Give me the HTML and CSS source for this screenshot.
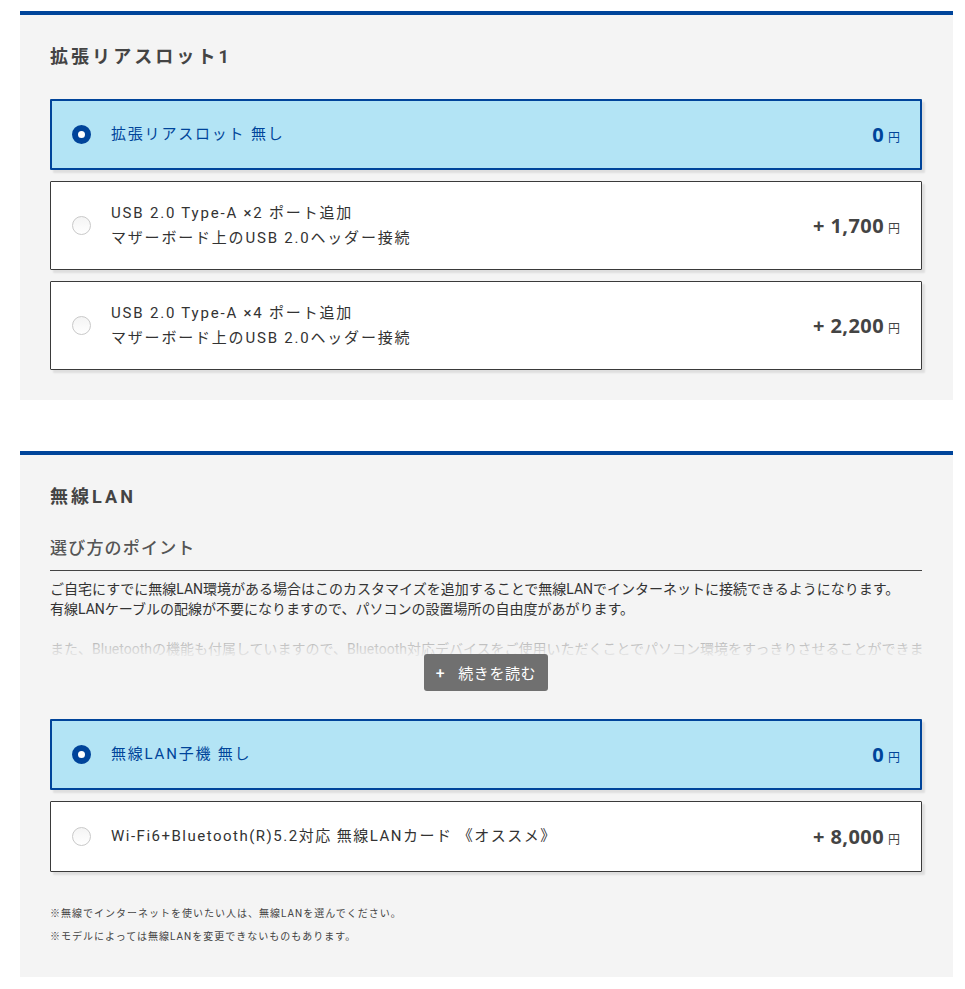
FILE: index.html
```html
<!DOCTYPE html>
<html lang="ja">
<head>
<meta charset="utf-8">
<title>カスタマイズ</title>
<link rel="stylesheet" href="styles.css">
</head>
<body>
<div class="page">
  <section class="block">
    <h2 class="block-title">拡張リアスロット1</h2>
    <div class="options">
      <label class="option selected">
        <span class="radio"></span>
        <span class="opt-text">拡張リアスロット 無し</span>
        <span class="price"><b>0</b><small>円</small></span>
      </label>
      <label class="option tall">
        <span class="radio"></span>
        <span class="opt-text">USB 2.0 Type-A ×2 ポート追加<br>マザーボード上のUSB 2.0ヘッダー接続</span>
        <span class="price"><b>+ 1,700</b><small>円</small></span>
      </label>
      <label class="option tall">
        <span class="radio"></span>
        <span class="opt-text">USB 2.0 Type-A ×4 ポート追加<br>マザーボード上のUSB 2.0ヘッダー接続</span>
        <span class="price"><b>+ 2,200</b><small>円</small></span>
      </label>
    </div>
  </section>

  <section class="block second">
    <h2 class="block-title">無線LAN</h2>
    <h3 class="point-title">選び方のポイント</h3>
    <div class="more">
      <div class="more-text">
        <p>ご自宅にすでに無線LAN環境がある場合はこのカスタマイズを追加することで無線LANでインターネットに接続できるようになります。<br>有線LANケーブルの配線が不要になりますので、パソコンの設置場所の自由度があがります。</p>
        <p>また、Bluetoothの機能も付属していますので、Bluetooth対応デバイスをご使用いただくことでパソコン環境をすっきりさせることができます。</p>
      </div>
      <button class="more-btn"><span class="plus">+</span>続きを読む</button>
    </div>
    <div class="options">
      <label class="option selected">
        <span class="radio"></span>
        <span class="opt-text">無線LAN子機 無し</span>
        <span class="price"><b>0</b><small>円</small></span>
      </label>
      <label class="option">
        <span class="radio"></span>
        <span class="opt-text wide">Wi-Fi6+Bluetooth(R)5.2対応 無線LANカード 《オススメ》</span>
        <span class="price"><b>+ 8,000</b><small>円</small></span>
      </label>
    </div>
    <div class="notes">
      <p>※無線でインターネットを使いたい人は、無線LANを選んでください。</p>
      <p>※モデルによっては無線LANを変更できないものもあります。</p>
    </div>
  </section>
</div>
</body>
</html>
```

FILE: styles.css
```css
* { box-sizing: border-box; }
html, body { margin: 0; padding: 0; background: #fff; }
body {
  font-family: Roboto, "Noto Sans CJK JP", sans-serif;
  color: #333;
}
.page {
  padding: 11px 12px 0 20px;
  width: 965px;
}
.block {
  background: #f4f4f4;
  border-top: 4px solid #00449a;
  padding: 29px 31px 30px 30px;
}
.block.second {
  margin-top: 51px;
  padding-bottom: 29px;
}
.block-title {
  margin: 0;
  font-family: Roboto, "Noto Sans CJK JP", sans-serif;
  font-size: 18px;
  line-height: 26px;
  font-weight: 700;
  color: #444;
  letter-spacing: 0.17em;
}
.options {
  display: flex;
  flex-direction: column;
  gap: 11px;
  margin-top: 29px;
}
.option {
  display: flex;
  align-items: center;
  height: 71px;
  padding: 0 21px 0 21px;
  background: #fff;
  border: 1px solid #3a3a3a;
  border-radius: 1px;
  box-shadow: 3px 3px 2px rgba(0, 0, 0, 0.09);
  cursor: pointer;
}
.option.tall { height: 89px; }
.option.selected {
  background: #b3e4f5;
  border: 2px solid #00449a;
  padding-left: 20px;
  padding-right: 20px;
}
.radio {
  flex: none;
  width: 19px;
  height: 19px;
  border-radius: 50%;
  border: 1px solid #c9c9c9;
  background: linear-gradient(#f4f4f4, #ffffff);
  margin-right: 20px;
}
.option.selected .radio {
  border: 6px solid #00449a;
  background: #fff;
}
.opt-text {
  flex: 1;
  font-size: 15px;
  line-height: 25px;
  letter-spacing: 0.12em;
  color: #333;
}
.opt-text.wide { letter-spacing: 0.1em; }
.option.selected .opt-text { color: #00449a; }
.price {
  flex: none;
  font-family: "Open Sans", "Noto Sans", sans-serif;
  color: #444;
  display: flex;
  align-items: baseline;
}
.price b {
  font-size: 20px;
  font-weight: 700;
  letter-spacing: 0.02em;
}
.price small {
  font-family: "Noto Sans CJK JP", sans-serif;
  font-size: 12px;
  margin-left: 4px;
}
.option.selected .price { color: #00449a; }

.point-title {
  margin: 26px 0 0;
  font-size: 17px;
  line-height: 24px;
  font-weight: 500;
  color: #555;
  padding-bottom: 10px;
  border-bottom: 1px solid #444;
  letter-spacing: 0.07em;
}
.more {
  position: relative;
  height: 112px;
  margin-top: 8px;
  overflow: hidden;
}
.more-text p {
  margin: 0 0 20px;
  font-size: 14px;
  line-height: 20px;
  color: #333;
  white-space: nowrap;
}
.more::after {
  content: "";
  position: absolute;
  left: 0;
  right: 0;
  top: 55px;
  bottom: 0;
  background: linear-gradient(rgba(244,244,244,0.55), #f4f4f4 45%);
}
.more-btn {
  position: absolute;
  z-index: 1;
  left: 50%;
  bottom: 0;
  transform: translateX(-50%);
  width: 124px;
  height: 37px;
  border: none;
  border-radius: 3px;
  background: #707070;
  color: #fff;
  font-family: "Noto Sans CJK JP", sans-serif;
  font-size: 15px;
  letter-spacing: 0.04em;
  display: flex;
  align-items: center;
  justify-content: center;
  padding: 0;
}
.more-btn .plus { margin-right: 13px; font-weight: 700; }
.second .options { margin-top: 28px; }
.notes { margin-top: 30px; }
.notes p {
  margin: 0;
  font-size: 10px;
  line-height: 23px;
  color: #444;
  letter-spacing: 0.1em;
}
```
